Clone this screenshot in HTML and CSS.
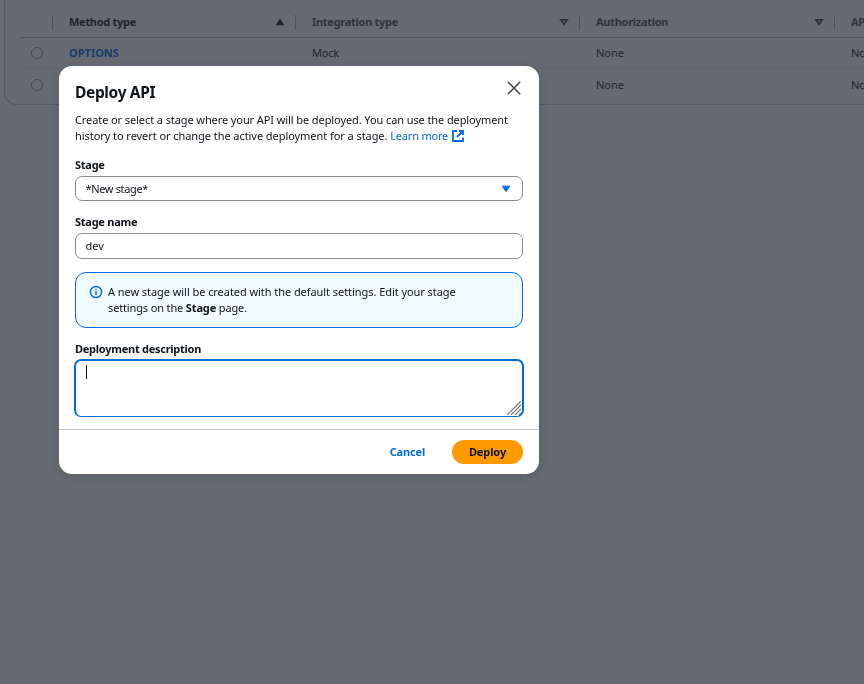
FILE: index.html
```html
<!DOCTYPE html>
<html lang="en">
<head>
<meta charset="utf-8">
<title>Deploy API</title>
<link rel="stylesheet" href="styles.css">
</head>
<body>
<main class="page">
  <section class="methods">
    <div class="row head">
      <div class="cell pick"></div>
      <div class="cell sorted"><span>Method type</span><svg class="sort" viewBox="0 0 10 8"><path d="M5 .8 9.3 7.2H.7z" fill="currentColor"/></svg></div>
      <div class="cell integration"><span>Integration type</span><svg class="sort" viewBox="0 0 10 8"><path d="M1.9 1.8h6.2L5 6.3z" fill="none" stroke="currentColor" stroke-width="1.8"/></svg></div>
      <div class="cell authorization"><span>Authorization</span><svg class="sort" viewBox="0 0 10 8"><path d="M1.9 1.8h6.2L5 6.3z" fill="none" stroke="currentColor" stroke-width="1.8"/></svg></div>
      <div class="cell"><span>API key</span></div>
    </div>
    <div class="row first">
      <div class="cell"><i class="radio"></i></div>
      <div class="cell"><a class="method">OPTIONS</a></div>
      <div class="cell"><span class="mock">Mock</span></div>
      <div class="cell">None</div>
      <div class="cell">Not required</div>
    </div>
    <div class="row second">
      <div class="cell"><i class="radio"></i></div>
      <div class="cell"></div>
      <div class="cell"></div>
      <div class="cell">None</div>
      <div class="cell">Not required</div>
    </div>
  </section>
</main>
<div class="overlay">
  <div class="modal" role="dialog">
    <header class="modal-head">
      <h1><span>Deploy API</span></h1>
      <svg class="close" viewBox="0 0 14 14"><path d="M.8.8l12.4 12.4M13.2.8.8 13.2" stroke="#424650" stroke-width="1.5" fill="none"/></svg>
    </header>
    <div class="modal-body">
      <p class="intro"><span class="intro-a">Create or select a stage where your API will be deployed. You can use the deployment</span><br><span class="intro-b">history to revert or change the active deployment for a stage.</span> <a class="more">Learn more</a><svg class="external" viewBox="0 0 12 12"><path d="M5 1H1v10h10V7.5M7 1h4v4M11 1 5 7" fill="none" stroke="currentColor" stroke-width="1.8"/></svg></p>
      <label class="label stage-label"><span>Stage</span></label>
      <div class="control select"><span class="new-stage">*New stage*</span><svg class="caret" viewBox="0 0 10 8"><path d="M1.2 1.2h7.6L5 6.6z" fill="currentColor" stroke="currentColor" stroke-linejoin="round"/></svg></div>
      <label class="label name-label"><span>Stage name</span></label>
      <div class="control input"><span class="dev">dev</span></div>
      <div class="info">
        <svg class="info-icon" viewBox="0 0 14 14"><circle cx="7" cy="7" r="5.6" fill="none" stroke="currentColor" stroke-width="1.5"/><path d="M7 6.1v4.1M7 3.7v1.3" stroke="currentColor" stroke-width="1.5"/></svg>
        <p><span class="info-a">A new stage will be created with the default settings. Edit your stage</span><br><span class="info-b">settings on the <b>Stage</b> page.</span></p>
      </div>
      <label class="label description-label"><span>Deployment description</span></label>
      <div class="textarea"><i class="text-cursor"></i><svg class="grip" viewBox="0 0 14 14"><path d="M0 14 14 0M4 14 14 4M8 14l6-6M12 14l2-2" stroke="#777" stroke-width="1.2" fill="none"/></svg></div>
    </div>
    <footer class="modal-foot">
      <a class="cancel">Cancel</a>
      <button class="deploy"><span>Deploy</span></button>
    </footer>
  </div>
</div>
</body>
</html>
```
FILE: styles.css
```css
* { box-sizing: border-box; }
html, body { margin: 0; height: 100%; overflow: hidden; }
body {
  font: 11px/16px "Noto Sans", "Open Sans", sans-serif;
  color: #0f141a;
  background: #fff;
}
h1, p { margin: 0; }
svg { display: block; flex: none; }

.page { width: 100%; padding-left: 4px; overflow: hidden; }
.methods {
  height: 105px;
  padding: 7px 0 0 16px;
  border: solid #c6c6cd;
  border-width: 0 0 1px 1px;
  border-bottom-left-radius: 13px;
}
.row {
  display: grid;
  grid-template-columns: 32px 243px 284px 255px minmax(0, 1fr);
  height: 31px;
  border-bottom: 1px solid #ebebf0;
}
.row.head { border-color: #b4b4bb; font-weight: 700; color: #424650; letter-spacing: -.28px; }
.row.second { height: 32px; border: 0; }
.cell { display: flex; align-items: center; padding-left: 16px; white-space: nowrap; overflow: hidden; }
.cell:first-child { padding-left: 10px; }
.head .cell { position: relative; justify-content: space-between; padding-right: 11px; }
.head .cell:not(:last-child)::after {
  content: "";
  position: absolute;
  right: 0;
  top: 8px;
  width: 1px;
  height: 15px;
  background: #b4b4bb;
}
.head .sorted { color: #0f141a; }
.sort { width: 10px; height: 8px; }
.radio { width: 12px; height: 12px; margin-top: -1px; border: 1px solid #8c8c94; border-radius: 50%; }
.method { color: #006ce0; font-weight: 700; }
.mock { letter-spacing: -.2px; }

.overlay { position: fixed; inset: 0; padding: 66px 0 0 59px; background: rgba(35, 43, 55, .7); }
.modal {
  display: flex;
  flex-direction: column;
  width: 480px;
  height: 408px;
  border-radius: 13px;
  background: #fff;
  box-shadow: 0 2px 12px rgba(0, 7, 22, .12);
}
.modal-head { display: flex; justify-content: space-between; padding: 15px 18px 0 16px; height: 46px; }
h1 { font-size: 15.5px; line-height: 22px; font-weight: 700; letter-spacing: -.35px; }
.close { width: 14px; height: 14px; }
.modal-body { padding: 0 16px; height: 317px; white-space: nowrap; }
.intro { height: 45px; }
.intro-a { letter-spacing: -.092px; }
.intro-b { letter-spacing: -.06px; }
.intro .more { color: #006ce0; letter-spacing: -.2px; }
.external { display: inline-block; width: 12px; height: 12px; margin-left: 4px; vertical-align: -2px; color: #006ce0; }
.label { display: block; height: 19px; font-weight: 700; letter-spacing: -.26px; }
.control {
  display: flex;
  align-items: center;
  justify-content: space-between;
  height: 25px;
  padding: 0 11px 0 9.5px;
  border: 1px solid #8c8c94;
  border-radius: 7px;
}
.new-stage { letter-spacing: -.35px; }
.caret { width: 10px; height: 8px; color: #006ce0; }
.name-label { margin-top: 13px; }
.input { height: 26px; }
.info {
  display: flex;
  gap: 5.5px;
  height: 56px;
  margin: 13px 0;
  padding: 11px 12.5px;
  border: 1px solid #006ce0;
  border-radius: 11px;
  background: #f0fbff;
}
.info-icon { width: 14px; height: 14px; margin-top: 1px; color: #006ce0; }
.info-a { letter-spacing: -.057px; }
.info-b { letter-spacing: -.14px; }
.description-label { height: 18px; }
.textarea {
  position: relative;
  width: 450px;
  height: 58px;
  margin-left: -1px;
  padding: 4px 10px;
  border: 2px solid #006ce0;
  border-bottom-width: 1px;
  border-radius: 7px;
}
.text-cursor { display: block; width: 1px; height: 14px; background: #0f141a; }
.grip { position: absolute; right: 1px; bottom: 1px; width: 14px; height: 14px; }
.modal-foot {
  display: flex;
  align-items: center;
  justify-content: flex-end;
  gap: 27px;
  height: 45px;
  padding-right: 16px;
  border-top: 1px solid #c6c6cd;
}
.cancel { color: #006ce0; font-weight: 700; letter-spacing: -.17px; }
.deploy {
  width: 71px;
  height: 24px;
  padding: 0;
  border: 0;
  border-radius: 12px;
  background: #ff9900;
  color: #0f141a;
  font: 700 11px/16px "Noto Sans", "Open Sans", sans-serif;
  letter-spacing: -.1px;
}
```
